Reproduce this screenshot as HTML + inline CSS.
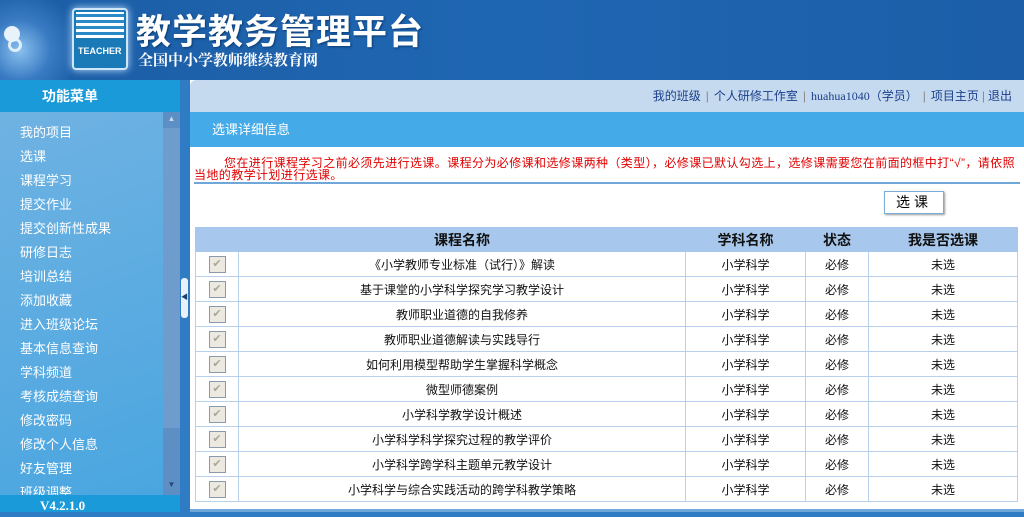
<!DOCTYPE html>
<html><head><meta charset="utf-8"><style>
*{margin:0;padding:0;box-sizing:border-box}
body{width:1024px;height:512px;overflow:hidden;background:#2f7cc4;font-family:"Liberation Sans","Noto Sans CJK SC",sans-serif;font-size:12px;position:relative}
.hdr{position:absolute;left:0;top:0;width:1024px;height:80px;background:linear-gradient(90deg,#1c5ea6 0%,#1f66b2 50%,#1c5ea8 100%)}
.abs{position:absolute}
.side{position:absolute;left:0;top:80px;width:180px;height:432px}
.stitle{height:32px;background:#1a9ad8;color:#fff;font-weight:bold;font-size:14px;text-align:center;line-height:32px;padding-right:40px}
.menu{position:absolute;top:32px;left:0;width:163px;height:383px;background:linear-gradient(160deg,#6fb2e2,#4aa6e0);overflow:hidden;padding-top:9px}
.menu div{color:#fff;font-size:13px;height:24px;line-height:24px;padding-left:20px}
.sb{position:absolute;top:32px;left:163px;width:17px;height:383px;background:#5e8fc4}
.foot{position:absolute;top:415px;left:0;width:180px;height:17px;background:#1a9ad8;color:#fff;font-family:"Liberation Serif",serif;font-weight:bold;font-size:13px;padding-left:40px;line-height:22px}
.main{position:absolute;left:190px;top:80px;width:834px;height:432px;background:#fff}
.top{height:32px;background:#c6daef;border-top-left-radius:6px;text-align:right;padding-right:12px;line-height:32px;color:#1a3f8a;font-size:12px}
.top .s{color:#888;margin:0 5px}
.tt{height:35px;background:#44aae8;color:#fff;font-size:13px;line-height:35px;padding-left:22px}
.red{position:absolute;left:4px;top:77px;width:830px;color:#e00000;font-size:12px;line-height:12px;text-indent:30px;white-space:nowrap;letter-spacing:0.4px}
table{position:absolute;left:5px;top:147px;width:823px;border-collapse:collapse}
td,th{border:1px solid #b8d0ea;text-align:center;height:25px;font-size:12px;color:#111}
th{background:#a7c8ec;height:24px;font-size:14px;border-color:#a7c8ec}
.cb{display:inline-block;width:17px;height:17px;border:1px solid #8a9aaa;background:#ece9e1;vertical-align:middle;color:#a8a898;font-size:11px;line-height:15px}
</style></head><body>
<div class="hdr">
 <div class="abs" style="left:0;top:0;width:70px;height:80px;background:radial-gradient(circle at 20px 50px,#8ac0ee 0,#3a7cc4 30px,transparent 60px)"></div>
 <div class="abs" style="left:8px;top:38px;width:14px;height:14px;border:3px solid #dfeefa;border-radius:50%"></div>
 <div class="abs" style="left:4px;top:26px;width:16px;height:16px;background:#e8f2fa;border-radius:50%"></div>
 <div class="abs" style="left:72px;top:8px;width:56px;height:62px;background:#1a7ab8;border:2px solid #cfe6f8;border-radius:4px;box-shadow:0 0 8px #bfe0ff"></div>
 <div class="abs" style="left:76px;top:12px;width:48px;height:26px;background:repeating-linear-gradient(0deg,#fff 0 3px,#2a8ac8 3px 6px)"></div>
 <div class="abs" style="left:78px;top:46px;color:#fff;font-size:9px;font-weight:bold">TEACHER</div>
 <div class="abs" style="left:136px;top:4px;color:#fff;font-size:35px;font-weight:bold;letter-spacing:1px;text-shadow:1px 1px 2px #0a3a70">教学教务管理平台</div>
 <div class="abs" style="left:138px;top:49px;color:#fff;font-size:15px;font-weight:bold;font-family:'Noto Serif CJK SC',serif">全国中小学教师继续教育网</div>
</div>
<div class="side">
 <div class="stitle">功能菜单</div>
 <div class="menu">
  <div>我的项目</div><div>选课</div><div>课程学习</div><div>提交作业</div><div>提交创新性成果</div><div>研修日志</div><div>培训总结</div><div>添加收藏</div><div>进入班级论坛</div><div>基本信息查询</div><div>学科频道</div><div>考核成绩查询</div><div>修改密码</div><div>修改个人信息</div><div>好友管理</div><div>班级调整</div>
 </div>
 <div class="sb"><div class="abs" style="left:2px;top:2px;width:13px;height:12px;color:#c8d8ea;font-size:8px;text-align:center">▲</div><div class="abs" style="left:0;top:16px;width:17px;height:300px;background:#6e9ccc"></div><div class="abs" style="left:2px;top:368px;width:13px;color:#2a4a7a;font-size:8px;text-align:center">▼</div></div>
 <div class="foot">V4.2.1.0</div>
</div>
<div class="abs" style="left:181px;top:278px;width:7px;height:40px;background:#e8f0fa;border-radius:3px;color:#1a3f6a;font-size:7px;line-height:40px">◀</div>
<div class="main">
 <div class="top">我的班级<span class="s">|</span>个人研修工作室<span class="s">|</span><span style="font-family:'Liberation Serif',serif">huahua1040</span>（学员）<span class="s">|</span>项目主页<span class="s" style="margin:0 3px">|</span>退出</div>
 <div class="tt">选课详细信息</div>
 <div class="red">您在进行课程学习之前必须先进行选课。课程分为必修课和选修课两种（类型），必修课已默认勾选上，选修课需要您在前面的框中打“√”，请依照<br>当地的教学计划进行选课。</div>
 <div class="abs" style="left:4px;top:102px;width:826px;height:2px;background:#6fa8d8"></div>
 <div class="abs" style="left:694px;top:111px;width:60px;height:23px;border:1px solid #7aaed8;box-shadow:1px 1px 2px #999;font-size:14px;text-align:center;line-height:21px;letter-spacing:4px;background:#fff">选课</div>
 <table>
  <tr><th style="width:43px"></th><th style="width:447px">课程名称</th><th style="width:120px">学科名称</th><th style="width:63px">状态</th><th>我是否选课</th></tr>
  <tr><td><span class="cb">✔</span></td><td>《小学教师专业标准（试行）》解读</td><td>小学科学</td><td>必修</td><td>未选</td></tr>
  <tr><td><span class="cb">✔</span></td><td>基于课堂的小学科学探究学习教学设计</td><td>小学科学</td><td>必修</td><td>未选</td></tr>
  <tr><td><span class="cb">✔</span></td><td>教师职业道德的自我修养</td><td>小学科学</td><td>必修</td><td>未选</td></tr>
  <tr><td><span class="cb">✔</span></td><td>教师职业道德解读与实践导行</td><td>小学科学</td><td>必修</td><td>未选</td></tr>
  <tr><td><span class="cb">✔</span></td><td>如何利用模型帮助学生掌握科学概念</td><td>小学科学</td><td>必修</td><td>未选</td></tr>
  <tr><td><span class="cb">✔</span></td><td>微型师德案例</td><td>小学科学</td><td>必修</td><td>未选</td></tr>
  <tr><td><span class="cb">✔</span></td><td>小学科学教学设计概述</td><td>小学科学</td><td>必修</td><td>未选</td></tr>
  <tr><td><span class="cb">✔</span></td><td>小学科学科学探究过程的教学评价</td><td>小学科学</td><td>必修</td><td>未选</td></tr>
  <tr><td><span class="cb">✔</span></td><td>小学科学跨学科主题单元教学设计</td><td>小学科学</td><td>必修</td><td>未选</td></tr>
  <tr><td><span class="cb">✔</span></td><td>小学科学与综合实践活动的跨学科教学策略</td><td>小学科学</td><td>必修</td><td>未选</td></tr>
 </table>
 <div class="abs" style="left:0;top:429px;width:834px;height:3px;background:#6fa8d8"></div>
</div>
</body></html>
